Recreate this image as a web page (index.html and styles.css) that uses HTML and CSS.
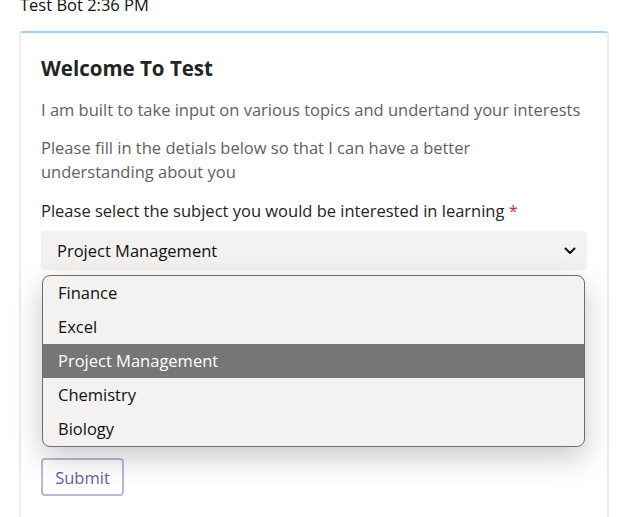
FILE: index.html
```html
<!DOCTYPE html>
<html>
<head>
<meta charset="utf-8">
<link rel="stylesheet" href="styles.css">
</head>
<body>
<div class="meta">Test Bot 2:36 PM</div>
<div class="card">
  <h1 class="title">Welcome To Test</h1>
  <p class="text">I am built to take input on various topics and undertand your interests</p>
  <p class="text second">Please fill in the detials below so that I can have a better understanding about you</p>
  <div class="label">Please select the subject you would be interested in learning <span class="req">*</span></div>
  <div class="field">
    <div class="select">
      <span>Project Management</span>
      <svg class="chev" width="12" height="8" viewBox="0 0 12 8"><path d="M1.5 1.5 L6 6 L10.5 1.5" fill="none" stroke="#111" stroke-width="2" stroke-linecap="round" stroke-linejoin="round"/></svg>
    </div>
    <ul class="list">
      <li class="opt">Finance</li>
      <li class="opt">Excel</li>
      <li class="opt active">Project Management</li>
      <li class="opt">Chemistry</li>
      <li class="opt">Biology</li>
    </ul>
    <div class="hidden-fields"></div>
  </div>
  <button class="submit">Submit</button>
</div>
</body>
</html>
```
FILE: styles.css
```css
html, body {
  margin: 0;
  padding: 0;
  background: #ffffff;
}
body {
  font-family: "Open Sans", "Noto Sans", sans-serif;
  font-size: 16.5px;
  color: #242424;
}
.meta {
  margin-top: -7px;
  padding-left: 20px;
  line-height: 24px;
  height: 17px;
  margin-bottom: 21px;
  color: #111;
}
.card {
  margin-left: 19px;
  width: 590px;
  box-sizing: border-box;
  border: 2px solid #ededed;
  border-top-color: #a9cdee;
  border-radius: 4px 4px 0 0;
  padding: 21px 20px 40px 20px;
  height: 520px;
}
.title {
  margin: 0;
  font-size: 20.5px;
  font-weight: 700;
  line-height: 28px;
  color: #242424;
}
.text {
  margin: 16px 0 0 0;
  line-height: 24px;
  color: #616161;
}
.text.second {
  margin-top: 14px;
}
.label {
  margin-top: 15px;
  line-height: 24px;
  color: #242424;
}
.req {
  color: #c4314b;
}
.field {
  position: relative;
  margin-top: 8px;
}
.select {
  height: 39px;
  box-sizing: border-box;
  background: #f3f2f1;
  border-radius: 4px;
  display: flex;
  align-items: center;
  justify-content: space-between;
  padding: 0 11px 0 16px;
  color: #111;
}
.list {
  position: absolute;
  top: 44px;
  left: 1px;
  right: 2px;
  margin: 0;
  padding: 0;
  list-style: none;
  background: #f3f2f1;
  border: 1px solid #6e6e6e;
  border-radius: 8px;
  overflow: hidden;
  box-shadow: 0 10px 30px rgba(0,0,0,0.22);
}
.opt {
  height: 34px;
  line-height: 34px;
  padding-left: 15px;
  color: #111;
}
.opt.active {
  background: #767676;
  color: #fff;
}
.hidden-fields {
  height: 188px;
}
.submit {
  display: block;
  width: 83px;
  height: 38px;
  box-sizing: border-box;
  background: #fff;
  border: 2px solid #b8b8d8;
  border-radius: 4px;
  font-family: inherit;
  font-size: 16.5px;
  color: #5f61a8;
  padding: 0;
}
```
